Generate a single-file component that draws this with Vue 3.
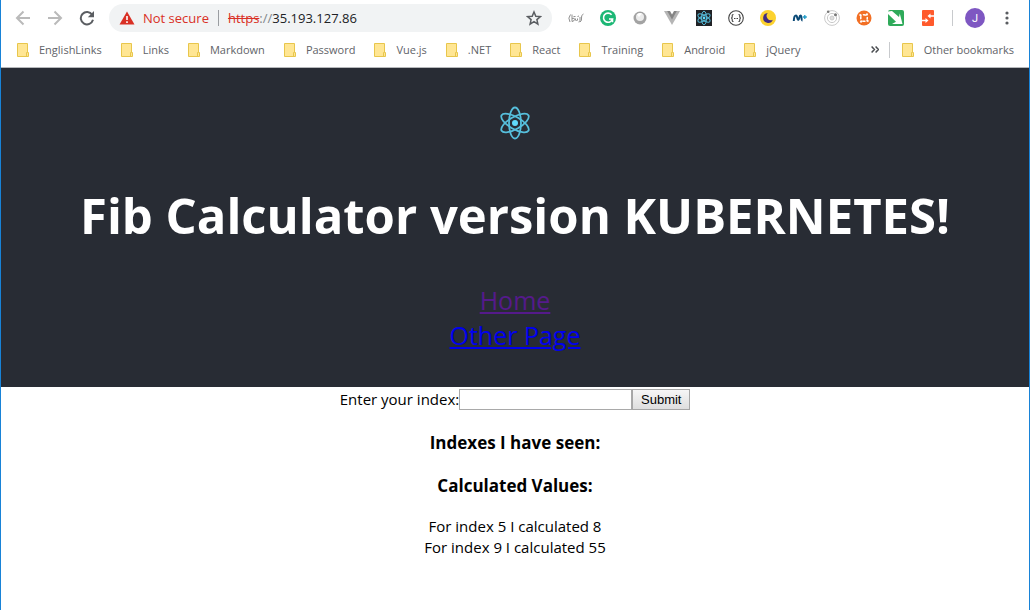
<script setup>
import { ref } from 'vue'

const index = ref('')
const bookmarks = [
  'EnglishLinks', 'Links', 'Markdown', 'Password', 'Vue.js',
  '.NET', 'React', 'Training', 'Android', 'jQuery',
]
const values = [
  { index: 5, value: 8 },
  { index: 9, value: 55 },
]
</script>

<template>
  <div class="window">
    <nav class="toolbar" aria-label="Browser toolbar">
      <button class="tool" aria-label="Back">
        <svg width="16" height="16" viewBox="0 0 16 16" fill="none" stroke="#bababa" stroke-width="2"><path d="M15 8H2.5M8.5 1.5L2 8l6.500 6.500" /></svg>
      </button>
      <button class="tool" aria-label="Forward">
        <svg width="16" height="16" viewBox="0 0 16 16" fill="none" stroke="#bababa" stroke-width="2"><path d="M1 8h12.500M7.500 1.500L14 8l-6.500 6.500" /></svg>
      </button>
      <button class="tool" aria-label="Reload">
        <svg width="16" height="16" viewBox="0 0 16 16"><path d="M13.200 4.800A6.200 6.200 0 1 0 14 9.800" fill="none" stroke="#5a5d61" stroke-width="2" /><path d="M15 1v6.200H8.800z" fill="#5a5d61" /></svg>
      </button>

      <div class="address">
        <svg width="16" height="14" viewBox="0 0 16 14"><path d="M8 0.500L15.500 13.500H0.500z" fill="#d93025" /><path d="M8 5v4M8 10.300v1.700" stroke="#fff" stroke-width="1.600" /></svg>
        <span class="insecure">Not secure</span>
        <span class="bar"></span>
        <span class="url"><s>https</s><span class="slashes">://</span>35.193.127.86</span>
        <button class="star" aria-label="Bookmark this page">
          <svg width="16" height="16" viewBox="0 0 16 16" fill="none" stroke="#5a5d61" stroke-width="1.500"><path d="M8 2l1.800 4.200 4.600.4-3.500 3 1 4.500L8 11.700l-3.900 2.400 1-4.500-3.500-3 4.600-.4z" /></svg>
        </button>
      </div>

      <div class="extensions">
        <button class="tool" aria-label="Signature">
          <svg width="16" height="16" viewBox="0 0 16 16" fill="none" stroke="#8f8f8f" stroke-width="1"><path d="M2.500 4.500Q-.5 8 2 12M15.500 4Q13 5 13.500 8t-1.500 4M4 4.500v7M4 8.500q3-1 2.500 1T4 11.500M7.500 8.500v1.500q1 2 2 0V8.500M12 7v4q0 1-1.500 1M5.500 6.500h2M9.500 6.500l1.500-.5" /></svg>
        </button>
        <button class="tool" aria-label="Grammar check">
          <svg width="16" height="16" viewBox="0 0 16 16"><circle cx="8" cy="8" r="8" fill="#1cb775" /><path d="M11.600 4.700A4.600 4.600 0 1 0 12.500 9H9M12.500 8.300v4" fill="none" stroke="#fff" stroke-width="1.600" /></svg>
        </button>
        <button class="tool" aria-label="Color picker">
          <svg width="16" height="16" viewBox="0 0 16 16"><circle cx="8" cy="8" r="6.500" fill="#a3a3a3" /><circle cx="8" cy="7" r="4" fill="#ececec" /><path d="M5 4.500a4 4 0 0 1 5-1L7 7z" fill="#fff" /></svg>
        </button>
        <button class="tool" aria-label="Vue devtools">
          <svg width="16" height="16" viewBox="0 0 16 16"><path d="M0 1h16L8 15z" fill="#b5b5b5" /><path d="M3.200 1h9.600L8 9.500z" fill="#858585" /><path d="M6 1h4L8 4.500z" fill="#fff" /></svg>
        </button>
        <button class="tool" aria-label="React devtools">
          <svg width="16" height="16" viewBox="0 0 16 16"><path d="M0 0h16v16H0z" fill="#202226" /><g fill="none" stroke="#55b9d6" stroke-width="1"><ellipse cx="8" cy="8" rx="6.800" ry="2.600" transform="rotate(90 8 8)" /><ellipse cx="8" cy="8" rx="6.800" ry="2.600" transform="rotate(30 8 8)" /><ellipse cx="8" cy="8" rx="6.800" ry="2.600" transform="rotate(-30 8 8)" /></g><circle cx="8" cy="8" r="1.400" fill="#61dafb" /></svg>
        </button>
        <button class="tool" aria-label="JSON viewer">
          <svg width="16" height="16" viewBox="0 0 16 16" fill="none" stroke="#444" stroke-width="1.100"><circle cx="8" cy="8" r="7.300" /><path d="M5.500 4.500q-1.500 0-1.300 1.700T3 8q1.300 0 1.200 1.800t1.300 1.700M10.500 4.500q1.500 0 1.300 1.700T13 8q-1.300 0-1.200 1.800t-1.300 1.700M6 8.500h1M7.500 8.500h1M9 8.500h1" /></svg>
        </button>
        <button class="tool" aria-label="Dark mode">
          <svg width="16" height="16" viewBox="0 0 16 16"><circle cx="8" cy="8" r="8" fill="#fcd22f" /><path d="M7.800 3a5 5 0 1 0 5 6.800A4.300 4.300 0 0 1 7.800 3z" fill="#412c83" /></svg>
        </button>
        <button class="tool" aria-label="Movistar">
          <svg width="16" height="16" viewBox="0 0 16 16" fill="none" stroke="#0b4a77"><path d="M1.800 11Q2 5.500 4 5.500C5.500 5.500 5 10 6.200 10S7 5.500 8.500 5.500 9 10.500 10.500 10.500" stroke-width="2" /><path d="M12.800 5v4M10.800 7h4" stroke="#1d9bc7" stroke-width="1.300" /></svg>
        </button>
        <button class="tool" aria-label="Orbit">
          <svg width="16" height="16" viewBox="0 0 16 16" fill="none" stroke="#c9c9c9" stroke-width="1"><circle cx="8" cy="8" r="7.400" /><circle cx="8" cy="8" r="4.600" /><circle cx="8" cy="8" r="2" fill="#ddd" /><circle cx="4.200" cy="1.800" r="1.300" fill="#777" stroke="none" /><circle cx="11.500" cy="4.800" r="1.500" fill="#777" stroke="none" /></svg>
        </button>
        <button class="tool" aria-label="Network hub">
          <svg width="16" height="16" viewBox="0 0 16 16"><circle cx="8" cy="8" r="7.500" fill="#f26f24" /><g fill="none" stroke="#fff"><circle cx="8" cy="8" r="3.300" stroke-width="1.500" stroke-dasharray="3.200 1.980" stroke-dashoffset="1.600" /><path d="M3.500 4.500l2 1.300M11.500 3.500l-1.200 2M12.500 11.500l-2-1.300M4.500 12.500l1.200-2" stroke-width="1.800" /></g></svg>
        </button>
        <button class="tool" aria-label="Arrow">
          <svg width="16" height="16" viewBox="0 0 16 16"><path d="M2 0h12a2 2 0 0 1 2 2v12a2 2 0 0 1-2 2H2a2 2 0 0 1-2-2V2a2 2 0 0 1 2-2z" fill="#2faa5a" /><path d="M0 1.500L4 1l7 6 .8-3.500L14.500 14H4l4-2.200L0 4z" fill="#fff" /></svg>
        </button>
        <button class="tool" aria-label="Redirect">
          <svg width="16" height="16" viewBox="0 0 16 16"><rect x="2" y="0" width="12" height="16" rx="1" fill="#ff5a2c" /><path d="M2 10.500h4M14 6h-4" stroke="#fff" stroke-width="1.300" /><path d="M5.500 8l3 2.500-3 2.500zM10.500 3.500L7.500 6l3 2.500z" fill="#fff" /></svg>
        </button>
      </div>

      <span class="divider"></span>
      <button class="avatar" aria-label="Profile">J</button>
      <button class="menu" aria-label="Menu">
        <svg width="4" height="14" viewBox="0 0 4 14" fill="#5a5d61"><circle cx="2" cy="2" r="1.600" /><circle cx="2" cy="7" r="1.600" /><circle cx="2" cy="12" r="1.600" /></svg>
      </button>
    </nav>

    <nav class="bookmarks" aria-label="Bookmarks">
      <button v-for="name in bookmarks" :key="name" class="bookmark">
        <svg width="12" height="14" viewBox="0 0 12 14"><path d="M.5.5h10v9h1v4H.5z" fill="#ffe694" stroke="#e8c64c" /><path d="M9.500 13v-3.500h1" fill="none" stroke="#e8c64c" /></svg>
        <span>{{ name }}</span>
      </button>
      <button class="more" aria-label="More bookmarks">
        <svg width="8" height="7" viewBox="0 0 8 7" fill="none" stroke="#4a4d51" stroke-width="1.500"><path d="M.6.6l2.800 2.900L.6 6.400M4.600.6l2.800 2.900-2.800 2.900" /></svg>
      </button>
      <span class="divider"></span>
      <button class="bookmark other">
        <svg width="12" height="14" viewBox="0 0 12 14"><path d="M.5.5h10v9h1v4H.5z" fill="#ffe694" stroke="#e8c64c" /><path d="M9.500 13v-3.500h1" fill="none" stroke="#e8c64c" /></svg>
        <span>Other bookmarks</span>
      </button>
    </nav>

    <header class="hero">
      <svg class="logo" width="32" height="34" viewBox="-16 -17 32 34">
        <g fill="none" stroke="#56bfdc" stroke-width="1.800">
          <ellipse rx="15.500" ry="6" transform="rotate(90)" />
          <ellipse rx="15.500" ry="6" transform="rotate(30)" />
          <ellipse rx="15.500" ry="6" transform="rotate(-30)" />
        </g>
        <circle r="3" fill="#61dafb" />
      </svg>
      <h1>Fib Calculator version KUBERNETES!</h1>
      <a class="visited" href="#home">Home</a>
      <a href="#other">Other Page</a>
    </header>

    <main>
      <form @submit.prevent>
        <label for="index">Enter your index:</label>
        <input id="index" v-model="index" type="text" />
        <button type="submit">Submit</button>
      </form>
      <h3>Indexes I have seen:</h3>
      <h3>Calculated Values:</h3>
      <div v-for="v in values" :key="v.index" class="value">
        For index {{ v.index }} I calculated {{ v.value }}
      </div>
    </main>
  </div>
</template>

<style>
body {
  margin: 0;
  background: #fff;
}
</style>

<style scoped>
.window {
  box-sizing: border-box;
  min-height: 100vh;
  border: solid #1883d7;
  border-width: 0 1px;
  font-family: "Open Sans", "Noto Sans", sans-serif;
  color: #000;
}
button {
  padding: 0;
  border: 0;
  background: none;
  font: inherit;
}
svg {
  display: block;
  flex: none;
}
.toolbar {
  display: flex;
  align-items: center;
  box-sizing: border-box;
  height: 36px;
  padding: 0 12px 0 6px;
}
.tool {
  display: flex;
  flex: none;
  justify-content: center;
  width: 32px;
}
.address {
  display: flex;
  flex: 1;
  align-items: center;
  height: 28px;
  margin: 0 8px 0 6px;
  padding: 0 10px;
  border-radius: 14px;
  background: #f1f3f4;
  font-size: 13px;
  white-space: nowrap;
}
.insecure {
  margin-left: 8px;
  color: #d93025;
}
.bar {
  width: 1px;
  height: 16px;
  margin: 0 9px;
  background: #9a9da1;
}
.url {
  flex: 1;
  color: #202124;
}
.url s {
  color: #d93025;
}
.slashes {
  color: #80868b;
}
.extensions {
  display: flex;
}
.divider {
  flex: none;
  width: 1px;
  height: 16px;
  background: #c8cacd;
}
.toolbar .divider {
  margin: 0 12px 0 8px;
}
.avatar {
  width: 20px;
  height: 20px;
  border-radius: 50%;
  background: #7e57c2;
  color: #fff;
  font-family: Roboto, sans-serif;
  font-size: 11px;
}
.menu {
  display: flex;
  justify-content: center;
  width: 20px;
  margin-left: 12px;
}
.bookmarks {
  display: flex;
  align-items: center;
  box-sizing: border-box;
  height: 32px;
  padding: 0 15px 4px 16px;
  border-bottom: 1px solid #b6b8bb;
  font-size: 11px;
}
.bookmark {
  display: flex;
  align-items: center;
  gap: 10px;
  margin-right: 19px;
  color: #5f6368;
  white-space: nowrap;
}
.more {
  margin: 0 10px 0 auto;
}
.other {
  margin: 0 0 0 12px;
}
.hero {
  display: flex;
  flex-direction: column;
  align-items: center;
  padding: 38px 0 34px;
  background: #282c34;
  font-size: 25px;
  line-height: 35px;
}
.hero h1 {
  margin: 40px 0 33px;
  color: #fff;
  font-size: 49px;
  line-height: 70px;
  text-align: center;
}
.hero a {
  color: #00e;
}
.hero .visited {
  color: #551a8b;
}
main {
  font-size: 15px;
  line-height: 21px;
  text-align: center;
}
form {
  display: flex;
  justify-content: center;
  align-items: center;
  padding: 2px 0;
}
form input {
  box-sizing: border-box;
  width: 173px;
  height: 21px;
  padding: 1px;
  border: 1px solid #a9a9a9;
  font: 13px "Liberation Sans", sans-serif;
}
form button {
  box-sizing: border-box;
  width: 58px;
  height: 21px;
  border: 1px solid #a6a6a6;
  background: linear-gradient(#f6f6f6, #dedede);
  color: #000;
  font: 13px "Liberation Sans", sans-serif;
}
h3 {
  margin: 18px 0;
  font-size: 17px;
  line-height: 25px;
}
</style>
